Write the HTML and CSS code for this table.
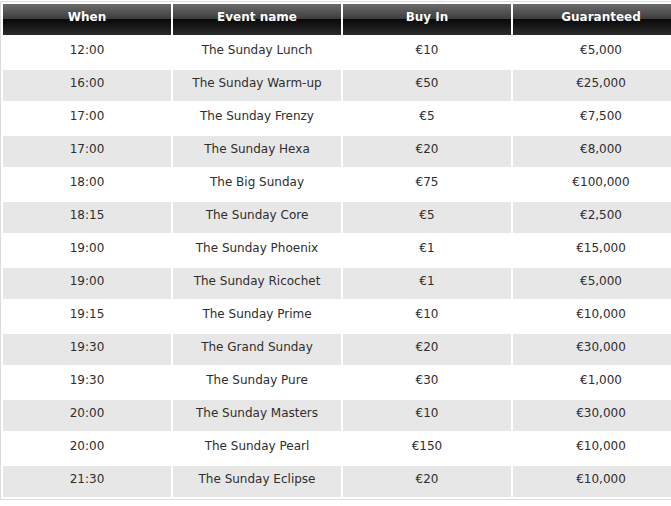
FILE: index.html
```html
<!DOCTYPE html>
<html>
<head>
<meta charset="utf-8">
<link rel="stylesheet" href="styles.css">
</head>
<body>
<div class="frame">
<table class="schedule">
<colgroup>
<col class="c-when"><col class="c-name"><col class="c-buy"><col class="c-gtd">
</colgroup>
<thead>
<tr><th>When</th><th>Event name</th><th>Buy In</th><th>Guaranteed</th></tr>
</thead>
<tbody>
<tr><td>12:00</td><td>The Sunday Lunch</td><td>€10</td><td>€5,000</td></tr>
<tr class="alt"><td>16:00</td><td>The Sunday Warm-up</td><td>€50</td><td>€25,000</td></tr>
<tr><td>17:00</td><td>The Sunday Frenzy</td><td>€5</td><td>€7,500</td></tr>
<tr class="alt"><td>17:00</td><td>The Sunday Hexa</td><td>€20</td><td>€8,000</td></tr>
<tr><td>18:00</td><td>The Big Sunday</td><td>€75</td><td>€100,000</td></tr>
<tr class="alt"><td>18:15</td><td>The Sunday Core</td><td>€5</td><td>€2,500</td></tr>
<tr><td>19:00</td><td>The Sunday Phoenix</td><td>€1</td><td>€15,000</td></tr>
<tr class="alt"><td>19:00</td><td>The Sunday Ricochet</td><td>€1</td><td>€5,000</td></tr>
<tr><td>19:15</td><td>The Sunday Prime</td><td>€10</td><td>€10,000</td></tr>
<tr class="alt"><td>19:30</td><td>The Grand Sunday</td><td>€20</td><td>€30,000</td></tr>
<tr><td>19:30</td><td>The Sunday Pure</td><td>€30</td><td>€1,000</td></tr>
<tr class="alt"><td>20:00</td><td>The Sunday Masters</td><td>€10</td><td>€30,000</td></tr>
<tr><td>20:00</td><td>The Sunday Pearl</td><td>€150</td><td>€10,000</td></tr>
<tr class="alt"><td>21:30</td><td>The Sunday Eclipse</td><td>€20</td><td>€10,000</td></tr>
</tbody>
</table>
</div>
</body>
</html>
```
FILE: styles.css
```css
html, body {
  margin: 0;
  padding: 0;
  background: #fff;
  overflow: hidden;
}
body {
  padding-top: 1px;
  font-family: "DejaVu Sans", Verdana, sans-serif;
}
.frame {
  width: 690px;
  border: 1px solid #dcdcdc;
  background: #fff;
}
.schedule {
  border-collapse: separate;
  border-spacing: 2px;
  width: 690px;
  table-layout: fixed;
}
.c-when, .c-name, .c-buy {
  width: 168px;
}
.c-gtd {
  width: 176px;
}
.schedule th {
  height: 25px;
  padding: 0 0 6px;
  color: #fff;
  font-size: 12px;
  font-weight: bold;
  text-align: center;
  background: linear-gradient(to bottom, #6c6c6c 0%, #3c3c3c 48%, #0a0a0a 50%, #161616 70%, #2c2c2c 100%);
  text-shadow: 0 0 1px rgba(0,0,0,0.5);
}
.schedule td {
  height: 25px;
  padding: 0 0 6px;
  text-align: center;
  font-size: 12px;
  color: #2e2e2e;
  background: #fff;
}
.schedule tr.alt td {
  background: #e8e7e8;
}
```
